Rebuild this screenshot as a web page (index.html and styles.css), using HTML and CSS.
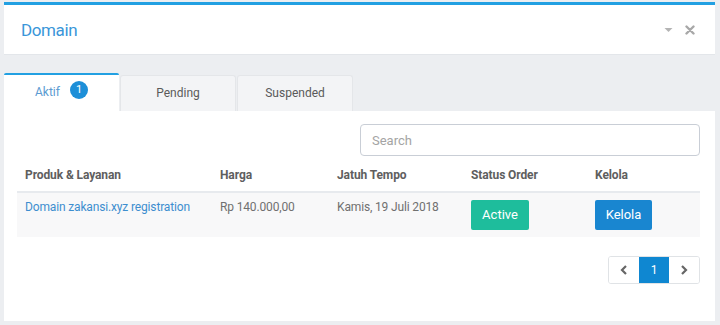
FILE: index.html
```html
<!DOCTYPE html>
<html lang="id">
<head>
<meta charset="utf-8">
<title>Domain</title>
<link rel="stylesheet" href="styles.css">
</head>
<body>
<div class="portlet">
  <div class="portlet-head">
    <span class="portlet-title">Domain</span>
    <div class="tools">
      <svg class="tool-caret" width="9" height="6" viewBox="0 0 9 6"><path d="M0.5 1 L8.5 1 L4.5 5 Z" fill="#b4b4b4"/></svg>
      <svg class="tool-close" width="10" height="10" viewBox="0 0 10 10"><path d="M1.5 1.5 L8.5 8.5 M8.5 1.5 L1.5 8.5" stroke="#a8a8a8" stroke-width="2.4" stroke-linecap="round"/></svg>
    </div>
  </div>
  <div class="tabs">
    <div class="tab active">Aktif <span class="badge">1</span></div>
    <div class="tab">Pending</div>
    <div class="tab">Suspended</div>
  </div>
  <div class="tab-body">
    <div class="search-row">
      <input class="search" type="text" placeholder="Search">
    </div>
    <table class="grid">
      <thead>
        <tr>
          <th class="c1">Produk &amp; Layanan</th>
          <th class="c2">Harga</th>
          <th class="c3">Jatuh Tempo</th>
          <th class="c4">Status Order</th>
          <th class="c5">Kelola</th>
        </tr>
      </thead>
      <tbody>
        <tr>
          <td><a class="link" href="#">Domain zakansi.xyz registration</a></td>
          <td>Rp 140.000,00</td>
          <td>Kamis, 19 Juli 2018</td>
          <td><span class="btn btn-green">Active</span></td>
          <td><span class="btn btn-blue">Kelola</span></td>
        </tr>
      </tbody>
    </table>
    <div class="pager-row">
      <div class="pager">
        <span class="pg"><svg width="8" height="10" viewBox="0 0 8 10"><path d="M6 1 L2 5 L6 9" stroke="#666" stroke-width="2.2" fill="none"/></svg></span>
        <span class="pg current">1</span>
        <span class="pg"><svg width="8" height="10" viewBox="0 0 8 10"><path d="M2 1 L6 5 L2 9" stroke="#666" stroke-width="2.2" fill="none"/></svg></span>
      </div>
    </div>
  </div>
</div>
</body>
</html>
```
FILE: styles.css
```css
* { box-sizing: border-box; }
html, body { margin: 0; padding: 0; }
body {
  background: #eceef1;
  font-family: Roboto, "Liberation Sans", Arial, sans-serif;
  color: #666;
  width: 720px;
  height: 325px;
  overflow: hidden;
}
.portlet {
  margin: 2px 5px 0 4px;
  border-top: 3px solid #22a0e2;
}
.portlet-head {
  background: #fff;
  height: 50px;
  border-bottom: 1px solid #e3e6ea;
  display: flex;
  align-items: center;
  justify-content: space-between;
  padding: 0 20px 0 17px;
}
.portlet-title {
  font-size: 17px;
  color: #3a96d9;
  font-weight: 400;
  letter-spacing: -0.4px;
}
.tools {
  display: flex;
  align-items: center;
  gap: 12px;
}
.tool-caret { margin-top: 1px; }
.tabs {
  display: flex;
  align-items: flex-end;
  padding-top: 18px;
  gap: 1px;
}
.tab {
  width: 116px;
  height: 36px;
  display: flex;
  align-items: center;
  justify-content: center;
  font-size: 12px;
  color: #5a5a5a;
  background: #f3f4f6;
  border: 1px solid #e4e6e9;
  border-bottom: none;
  border-radius: 3px 3px 0 0;
  padding-bottom: 2px;
}
.tab.active {
  width: 115px;
  height: 38px;
  background: #fff;
  color: #5b9bd1;
  border: none;
  border-top: 2px solid #22a0e2;
  padding-bottom: 2px;
  border-radius: 2px 2px 0 0;
}
.badge {
  display: inline-flex;
  align-items: center;
  justify-content: center;
  width: 18px;
  height: 18px;
  border-radius: 50%;
  background: #1d8fd8;
  color: #fff;
  font-size: 11px;
  margin-left: 10px;
  margin-top: -5px;
}
.tab-body {
  background: #fff;
  height: 210px;
  padding: 13px 15px 0 13px;
}
.search-row {
  display: flex;
  justify-content: flex-end;
}
.search {
  width: 340px;
  height: 32px;
  border: 1px solid #c9ced6;
  border-radius: 4px;
  padding: 0 11px;
  font-family: inherit;
  font-size: 13px;
  color: #555;
  outline: none;
}
.search::placeholder { color: #a4a4a4; }
.grid {
  width: 100%;
  border-collapse: collapse;
  margin-top: 2px;
  font-size: 12px;
}
.grid th {
  text-align: left;
  font-weight: 700;
  color: #5e5e5e;
  padding: 8px 8px 7px;
  line-height: 18px;
  border-bottom: 2px solid #e7eaee;
  letter-spacing: -0.1px;
}
.c1 { width: 195px; }
.c2 { width: 117px; }
.c3 { width: 134px; }
.c4 { width: 124px; }
.grid td {
  background: #f8f8f9;
  vertical-align: top;
  padding: 6px 8px 7px;
  line-height: 16px;
  color: #707070;
  letter-spacing: -0.15px;
}
.link {
  color: #3d8ecf;
  text-decoration: none;
}
.btn {
  display: inline-flex;
  align-items: center;
  justify-content: center;
  height: 30px;
  border-radius: 2px;
  color: #fff;
  font-size: 13px;
  margin-top: 1px;
  letter-spacing: 0;
}
.btn-green { background: #1ebd9c; width: 58px; }
.btn-blue { background: #1986d0; width: 57px; }
.pager-row {
  display: flex;
  justify-content: flex-end;
  margin-top: 19px;
}
.pager {
  display: flex;
  border: 1px solid #e0e3e6;
  border-radius: 3px;
  overflow: hidden;
  height: 28px;
}
.pg {
  width: 30px;
  display: flex;
  align-items: center;
  justify-content: center;
  font-size: 12px;
  color: #666;
  background: #fff;
}
.pg.current {
  background: #0f87d1;
  color: #fff;
}
```
